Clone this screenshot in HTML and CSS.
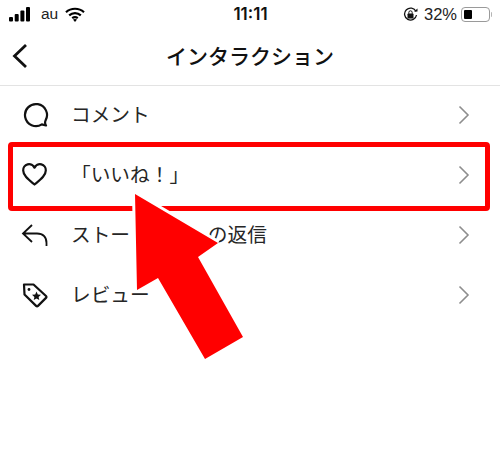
FILE: index.html
```html
<!DOCTYPE html>
<html lang="ja">
<head>
<meta charset="utf-8">
<title>インタラクション</title>
<link rel="stylesheet" href="styles.css">
</head>
<body>
<div class="screen">
  <div class="status">
    <div class="status-left">
      <svg class="signal" width="22" height="15" viewBox="0 0 22 15"><rect x="0" y="10" width="4" height="4.500" rx="1"/><rect x="5.700" y="7" width="4" height="7.500" rx="1"/><rect x="11.400" y="3.500" width="4" height="11" rx="1"/><rect x="17" y="0" width="4" height="14.500" rx="1"/></svg>
      <span class="carrier">au</span>
      <svg class="wifi" width="20" height="15" viewBox="0 0 20 15"><path d="M1 5.200C6 .6 14 .6 19 5.200M4.200 8.400c3.300-3 8.300-3 11.600 0M7.200 11.200c1.700-1.300 3.900-1.300 5.600 0" fill="none" stroke="#000" stroke-width="2.200"/><path d="M10 15l-2-2.400c1.200-.8 2.800-.8 4 0z"/></svg>
    </div>
    <div class="time">11:11</div>
    <div class="status-right">
      <svg class="lock" width="15" height="15" viewBox="0 0 15 15"><path d="M13 4.500A6 6 0 1 0 13.500 8" fill="none" stroke="#111" stroke-width="1.300"/><path d="M11 4.500h3.500V1.500z" fill="#111"/><rect x="4.500" y="6.500" width="6" height="5" rx=".8" fill="#111"/><path d="M5.800 6.800V5.500a1.700 1.700 0 0 1 3.400 0v1.300" fill="none" stroke="#111"/></svg>
      <span class="percent">32%</span>
      <div class="battery"><div class="battery-fill"></div></div>
      <div class="battery-cap"></div>
    </div>
  </div>
  <header class="nav">
    <svg class="back" width="18" height="26" viewBox="0 0 18 26"><path d="M15 2L3.500 13 15 24" fill="none" stroke="#111" stroke-width="2.800"/></svg>
    <h1 class="title">インタラクション</h1>
  </header>
  <ul class="list">
    <li class="row">
      <svg class="icon" width="28" height="28" viewBox="0 0 28 28"><path d="M25 24.500l-4.200-1.100A11 11 0 1 1 24.500 19.600c-.6 1.400-.5 3.300.5 4.900z" fill="none" stroke="#111" stroke-width="2.200" stroke-linejoin="round"/></svg>
      <span class="label">コメント</span>
      <svg class="chev" width="12" height="20" viewBox="0 0 12 20"><path d="M1.500 1.500L10 10l-8.500 8.500" fill="none" stroke="#8e8e8e" stroke-width="1.600"/></svg>
    </li>
    <li class="row">
      <svg class="icon" width="28" height="28" viewBox="0 0 28 28"><path d="M13.500 23.500C8 19 2.200 15 2.200 9.500a5.900 5.900 0 0 1 11.300-2.800A5.900 5.900 0 0 1 24.800 9.500c0 5.500-5.800 9.500-11.300 14z" fill="none" stroke="#111" stroke-width="2.200" stroke-linejoin="round"/></svg>
      <span class="label">「いいね！」</span>
      <svg class="chev" width="12" height="20" viewBox="0 0 12 20"><path d="M1.500 1.500L10 10l-8.500 8.500" fill="none" stroke="#8e8e8e" stroke-width="1.600"/></svg>
    </li>
    <li class="row">
      <svg class="icon" width="28" height="28" viewBox="0 0 28 28"><path d="M11 4L2 12.500l9 8.500M2 12.500h14c6 0 9.500 3.500 9.500 9.500v3" fill="none" stroke="#111" stroke-width="1.800"/></svg>
      <span class="label">ストーリーズへの返信</span>
      <svg class="chev" width="12" height="20" viewBox="0 0 12 20"><path d="M1.500 1.500L10 10l-8.500 8.500" fill="none" stroke="#8e8e8e" stroke-width="1.600"/></svg>
    </li>
    <li class="row">
      <svg class="icon" width="28" height="28" viewBox="0 0 28 28"><path d="M3 3.500h9.500l12.500 11.500c.6.600.6 1.300 0 1.900l-8 8c-.6.600-1.300.6-1.900 0L3.500 13.500z" fill="none" stroke="#111" stroke-width="2.200" stroke-linejoin="round"/><circle cx="8" cy="8.500" r="1.400" fill="#111"/><path d="M15.500 10.500l1.300 3 3.200.3-2.400 2.100.7 3.100-2.800-1.600-2.800 1.600.7-3.100-2.400-2.100 3.200-.3z" fill="#111"/></svg>
      <span class="label">レビュー</span>
      <svg class="chev" width="12" height="20" viewBox="0 0 12 20"><path d="M1.500 1.500L10 10l-8.500 8.500" fill="none" stroke="#8e8e8e" stroke-width="1.600"/></svg>
    </li>
  </ul>
  <div class="highlight"></div>
  <svg class="arrow" width="500" height="454" viewBox="0 0 500 454"><path class="arrow-halo" d="M137 284L135 194 218 243"/><path class="arrow-body" d="M135 194L218 243 198 257 243 337 205 359 158 278 137 290z"/></svg>
</div>
</body>
</html>
```
FILE: styles.css
```css
* { box-sizing: border-box; }
html, body { margin: 0; padding: 0; background: #fff; }
.screen {
  position: relative;
  width: 500px;
  height: 454px;
  overflow: hidden;
  font-family: "Noto Sans CJK JP", "Liberation Sans", sans-serif;
  color: #262626;
}
.status {
  display: grid;
  grid-template-columns: 1fr auto 1fr;
  align-items: center;
  height: 28px;
  padding: 0 8px 0 9px;
  color: #111;
}
.status-left, .status-right { display: flex; align-items: center; }
.status-right { justify-content: flex-end; }
.carrier {
  margin-left: 10px;
  font: 15.500px "Liberation Sans", sans-serif;
  color: #222;
}
.wifi { margin-left: 7px; }
.time { font: 600 17px "Inter", "Liberation Sans", sans-serif; }
.percent {
  margin-left: 6px;
  font: 16.500px "Liberation Sans", sans-serif;
  color: #222;
}
.battery {
  margin-left: 4px;
  width: 29px;
  height: 15px;
  border: 1px solid #9a9a9a;
  border-radius: 4px;
  padding: 2px;
}
.battery-fill { width: 8px; height: 100%; background: #000; border-radius: 1px; }
.battery-cap {
  width: 1px;
  height: 5px;
  margin-left: 1px;
  background: #b5b5b5;
  border-radius: 0 2px 2px 0;
}
.nav {
  position: relative;
  display: flex;
  align-items: center;
  justify-content: center;
  height: 57px;
  padding-bottom: 3px;
  box-shadow: 0 1px 0 #e3e3e3;
}
.back { position: absolute; left: 11px; top: 15px; }
.title {
  margin: 0;
  font-size: 21px;
  font-weight: 500;
  color: #111;
  line-height: 1;
}
.list { margin: 0; padding: 0; list-style: none; }
.row {
  display: flex;
  align-items: center;
  height: 60px;
  padding: 0 30px 0 21px;
}
.icon { flex: none; }
.label {
  margin-left: 22px;
  padding-bottom: 2px;
  flex: 1;
  font-size: 19.700px;
  line-height: 1;
  white-space: nowrap;
}
.chev { flex: none; }
.highlight {
  position: absolute;
  left: 8px;
  top: 142px;
  width: 482px;
  height: 69px;
  border: 5px solid #ff0000;
  border-radius: 4px;
}
.arrow { position: absolute; left: 0; top: 0; }
.arrow-halo { fill: none; stroke: #fff; stroke-width: 6px; }
.arrow-body { fill: #ff0000; }
```
